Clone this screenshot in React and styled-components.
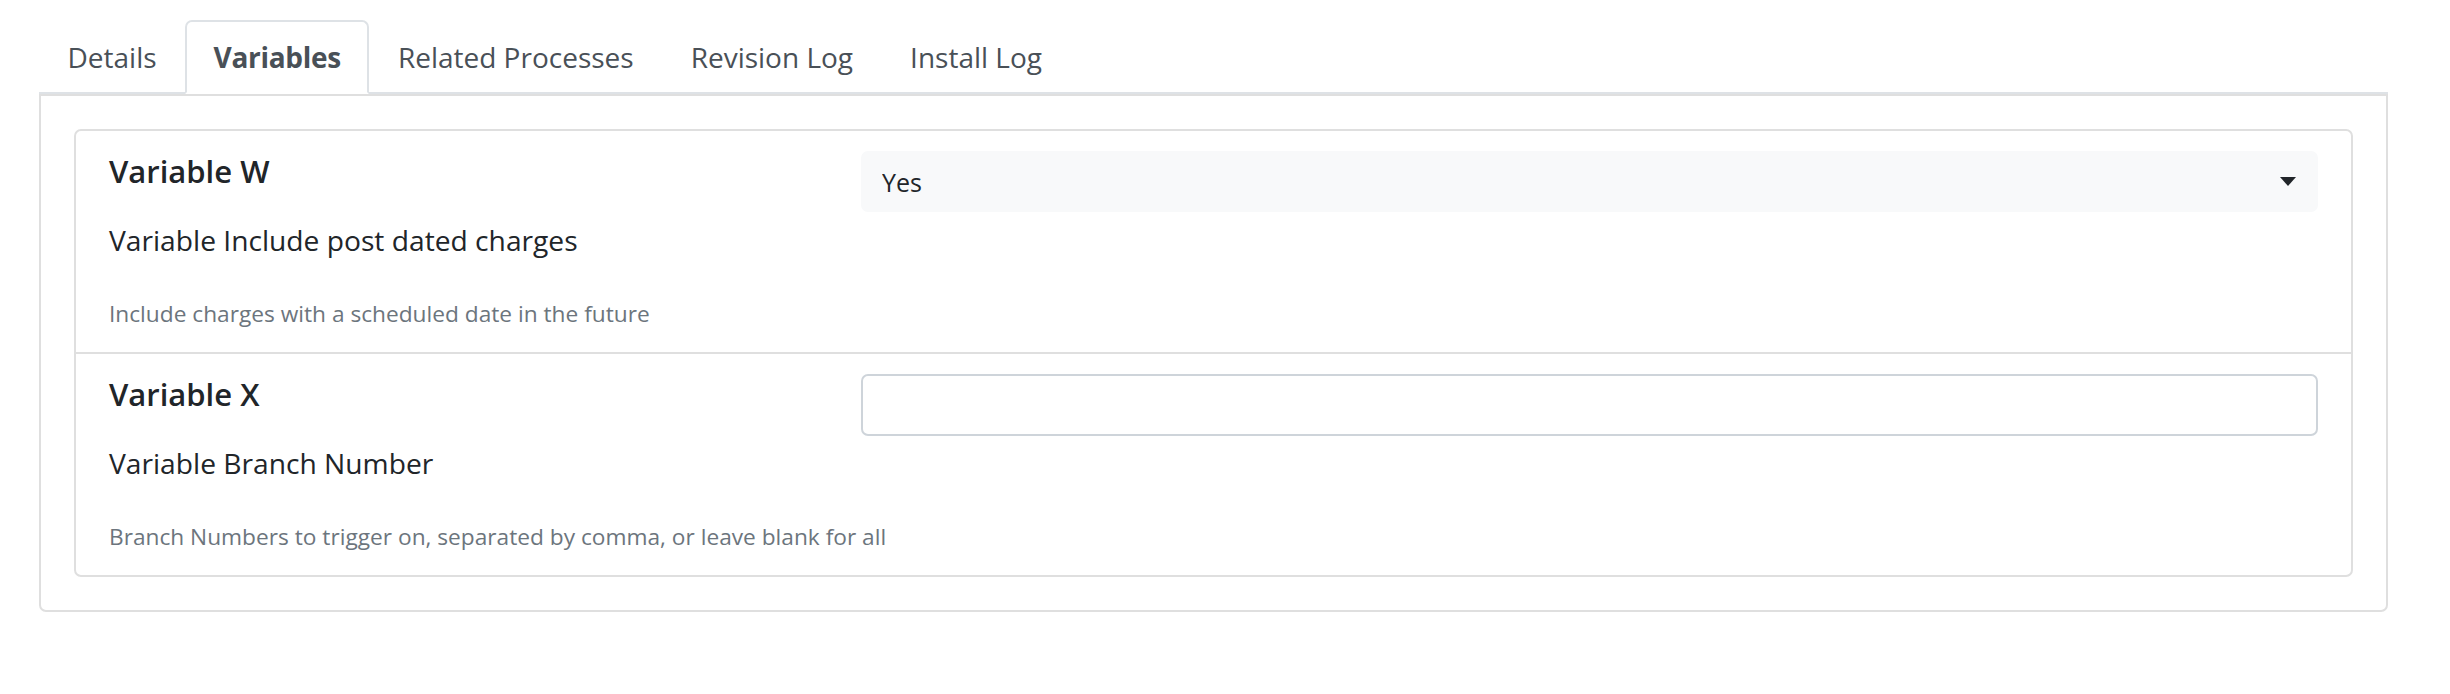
import React from "react";
import styled, { createGlobalStyle } from "styled-components";

const GlobalStyle = createGlobalStyle`
  * { box-sizing: border-box; }
  html, body { margin: 0; padding: 0; background: #ffffff; }
  body { font-family: "Open Sans", "Noto Sans", sans-serif; color: #212529; }
`;

const Page = styled.div`
  padding: 20px 62px 0 39px;
`;

const TabNav = styled.nav`
  display: flex;
  border-bottom: 2px solid #dee2e6;
`;

const Tab = styled.a`
  display: flex;
  align-items: center;
  height: 74px;
  padding: 0 26.5px;
  margin-bottom: -2px;
  border: 2px solid ${(p) => (p.$active ? "#dee2e6" : "transparent")};
  border-bottom-color: ${(p) => (p.$active ? "#ffffff" : "transparent")};
  border-radius: 7px 7px 0 0;
  background: ${(p) => (p.$active ? "#ffffff" : "transparent")};
  color: #495057;
  font-size: 28px;
  font-weight: ${(p) => (p.$active ? 700 : 400)};
  letter-spacing: ${(p) => (p.$active ? "-0.3px" : "0")};
  cursor: pointer;
  white-space: nowrap;
`;

const Card = styled.section`
  border: 2px solid #dfdfdf;
  border-radius: 0 0 7px 7px;
  padding: 33px;
`;

const FieldList = styled.div`
  border: 2px solid #dfdfdf;
  border-radius: 7px;
`;

const FieldRow = styled.div`
  display: grid;
  grid-template-columns: 752fr 1457fr;
  height: ${(p) => (p.$first ? 221 : 223)}px;
  padding: 20px 33px 0 33px;
  border-top: ${(p) => (p.$first ? "none" : "2px solid #dfdfdf")};
`;

const LabelCol = styled.div`
  display: flex;
  flex-direction: column;
  min-width: 0;
`;

const Title = styled.div`
  font-size: 31px;
  font-weight: 600;
  line-height: 41px;
  color: #212529;
`;

const Label = styled.div`
  font-size: 28.2px;
  line-height: 40px;
  margin-top: 28px;
  color: #212529;
  white-space: nowrap;
`;

const Help = styled.div`
  font-size: 22.7px;
  line-height: 36px;
  margin-top: 36px;
  color: #6c757d;
  white-space: nowrap;
`;

const ControlCol = styled.div`
  position: relative;
`;

const SelectBox = styled.select`
  width: 100%;
  height: 61px;
  appearance: none;
  border: none;
  border-radius: 7px;
  background: #f8f9fa;
  padding: 0 60px 0 21px;
  font-family: inherit;
  font-size: 25px;
  color: #212529;
  outline: none;
`;

const Caret = styled.svg`
  position: absolute;
  right: 22px;
  top: 26px;
  width: 16px;
  height: 9px;
  pointer-events: none;
`;

const TextInput = styled.input`
  width: 100%;
  height: 62px;
  border: 2px solid #ced4da;
  border-radius: 7px;
  background: #ffffff;
  padding: 0 22px;
  font-family: inherit;
  font-size: 25px;
  color: #212529;
  outline: none;
`;

const tabs = ["Details", "Variables", "Related Processes", "Revision Log", "Install Log"];

const fields = [
  {
    name: "Variable W",
    label: "Variable Include post dated charges",
    help: "Include charges with a scheduled date in the future",
    type: "select",
    value: "Yes",
  },
  {
    name: "Variable X",
    label: "Variable Branch Number",
    help: "Branch Numbers to trigger on, separated by comma, or leave blank for all",
    type: "text",
    value: "",
  },
];

export default function App() {
  return (
    <>
      <GlobalStyle />
      <Page>
        <TabNav>
          {tabs.map((t) => (
            <Tab key={t} $active={t === "Variables"}>
              {t}
            </Tab>
          ))}
        </TabNav>
        <Card>
          <FieldList>
            {fields.map((f, i) => (
              <FieldRow key={f.name} $first={i === 0}>
                <LabelCol>
                  <Title>{f.name}</Title>
                  <Label>{f.label}</Label>
                  <Help>{f.help}</Help>
                </LabelCol>
                <ControlCol>
                  {f.type === "select" ? (
                    <>
                      <SelectBox defaultValue={f.value}>
                        <option>Yes</option>
                        <option>No</option>
                      </SelectBox>
                      <Caret viewBox="0 0 16 9">
                        <path d="M0 0 H16 L8 9 Z" fill="#212529" />
                      </Caret>
                    </>
                  ) : (
                    <TextInput type="text" defaultValue={f.value} />
                  )}
                </ControlCol>
              </FieldRow>
            ))}
          </FieldList>
        </Card>
      </Page>
    </>
  );
}
